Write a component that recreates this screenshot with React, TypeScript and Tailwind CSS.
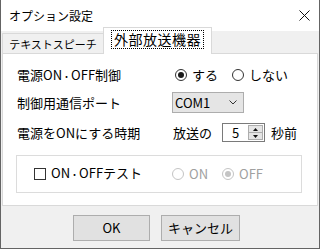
import React from "react";

const FONT = { fontFamily: '"Noto Sans CJK JP", "Noto Sans", sans-serif' };

function Radio({ checked, disabled, label }: { checked?: boolean; disabled?: boolean; label: string }) {
  return (
    <div className="flex items-center">
      <div
        className={`w-[12px] h-[12px] rounded-full border flex items-center justify-center bg-white ${
          disabled ? "border-[#c4c4c4]" : "border-[#333333]"
        }`}
      >
        {checked && <div className={`w-[6px] h-[6px] rounded-full ${disabled ? "bg-[#c4c4c4]" : "bg-[#1a1a1a]"}`} />}
      </div>
      <span className={`ml-[5px] text-[13px] leading-[18px] ${disabled ? "text-[#a0a0a0]" : "text-black"}`}>{label}</span>
    </div>
  );
}

export default function App() {
  return (
    <div
      style={FONT}
      className="w-[320px] h-[249px] bg-[#f0f0f0] border-x border-b border-[#646464] flex flex-col text-black overflow-hidden"
    >
      {/* Title bar */}
      <div className="h-[31px] bg-white flex items-center justify-between pl-[8px] pr-[9px] shrink-0">
        <span className="text-[12px] leading-[16px]">オプション設定</span>
        <svg width="11" height="11" viewBox="0 0 11 11">
          <path d="M0.5 0.5 L10.5 10.5 M10.5 0.5 L0.5 10.5" stroke="#111" strokeWidth="1" />
        </svg>
      </div>

      {/* Tabs */}
      <div className="flex items-end h-[22px] pl-[1px] shrink-0">
        <div className="h-[20px] w-[102px] border-l border-t border-r border-[#d9d9d9] bg-[#f0f0f0] flex items-center justify-center">
          <span className="text-[11px] leading-[14px]">テキストスピーチ</span>
        </div>
        <div className="h-[22px] w-[107px] -ml-[1px] border-l border-t border-r border-[#d9d9d9] bg-white flex items-start justify-center pt-[3px] relative z-10 -mb-[1px] box-content pb-[1px]">
          <span className="text-[14px] leading-[17px] tracking-[0.5px] px-[2px] outline outline-1 outline-dotted outline-black">
            外部放送機器
          </span>
        </div>
      </div>

      {/* Panel */}
      <div className="mx-[1px] h-[153px] border border-[#d9d9d9] bg-white pt-[12px] pl-[14px] shrink-0 text-[13px]">
        <div className="flex items-center h-[18px]">
          <div className="w-[155px]">
            電源ON<span className="text-[9px]">・</span>OFF制御
          </div>
          <div className="flex items-center pl-[3px] gap-[14px]">
            <Radio checked label="する" />
            <Radio label="しない" />
          </div>
        </div>

        <div className="flex items-center h-[21px] mt-[8px]">
          <div className="w-[155px]">制御用通信ポート</div>
          <div className="w-[72px] h-[21px] bg-[#e5e5e5] border border-[#adadad] flex items-center justify-between pl-[2px] pr-[6px]">
            <span className="text-[13px] leading-[16px]">COM1</span>
            <svg width="8" height="5" viewBox="0 0 8 5">
              <path d="M0.5 0.5 L4 4 L7.5 0.5" stroke="#333" strokeWidth="1" fill="none" />
            </svg>
          </div>
        </div>

        <div className="flex items-center h-[19px] mt-[10px]">
          <div className="w-[156px]">電源をONにする時期</div>
          <span>放送の</span>
          <div className="ml-[10px] w-[43px] h-[19px] border border-[#7a7a7a] bg-white flex items-center justify-between pl-[9px] pr-[1px]">
            <span className="leading-[16px]">5</span>
            <div className="flex flex-col w-[15px] h-[15px]">
              <div className="h-[8px] bg-[#e5e5e5] border border-[#adadad] flex items-center justify-center">
                <svg width="5" height="3" viewBox="0 0 5 3">
                  <path d="M2.5 0 L5 3 L0 3 Z" fill="#111" />
                </svg>
              </div>
              <div className="h-[8px] -mt-[1px] bg-[#e5e5e5] border border-[#adadad] flex items-center justify-center">
                <svg width="5" height="3" viewBox="0 0 5 3">
                  <path d="M0 0 L5 0 L2.5 3 Z" fill="#111" />
                </svg>
              </div>
            </div>
          </div>
          <span className="ml-[6px]">秒前</span>
        </div>

        <div className="mt-[13px] ml-[-1px] w-[286px] h-[38px] border border-[#dcdcdc] flex items-center pl-[17px]">
          <div className="flex items-center w-[138px]">
            <div className="w-[12px] h-[12px] border border-[#333333] bg-white" />
            <span className="ml-[5px] leading-[18px]">
              ON<span className="text-[9px]">・</span>OFFテスト
            </span>
          </div>
          <div className="flex items-center gap-[14px]">
            <Radio disabled label="ON" />
            <Radio disabled checked label="OFF" />
          </div>
        </div>
      </div>

      {/* Buttons */}
      <div className="flex justify-center gap-[11px] pt-[9px] pl-[1px] pr-[8px]">
        <button className="w-[77px] h-[26px] bg-[#e1e1e1] border border-[#adadad] text-[13px] leading-[16px]">OK</button>
        <button className="w-[79px] h-[26px] bg-[#e1e1e1] border border-[#adadad] text-[13px] leading-[16px]">キャンセル</button>
      </div>
    </div>
  );
}
